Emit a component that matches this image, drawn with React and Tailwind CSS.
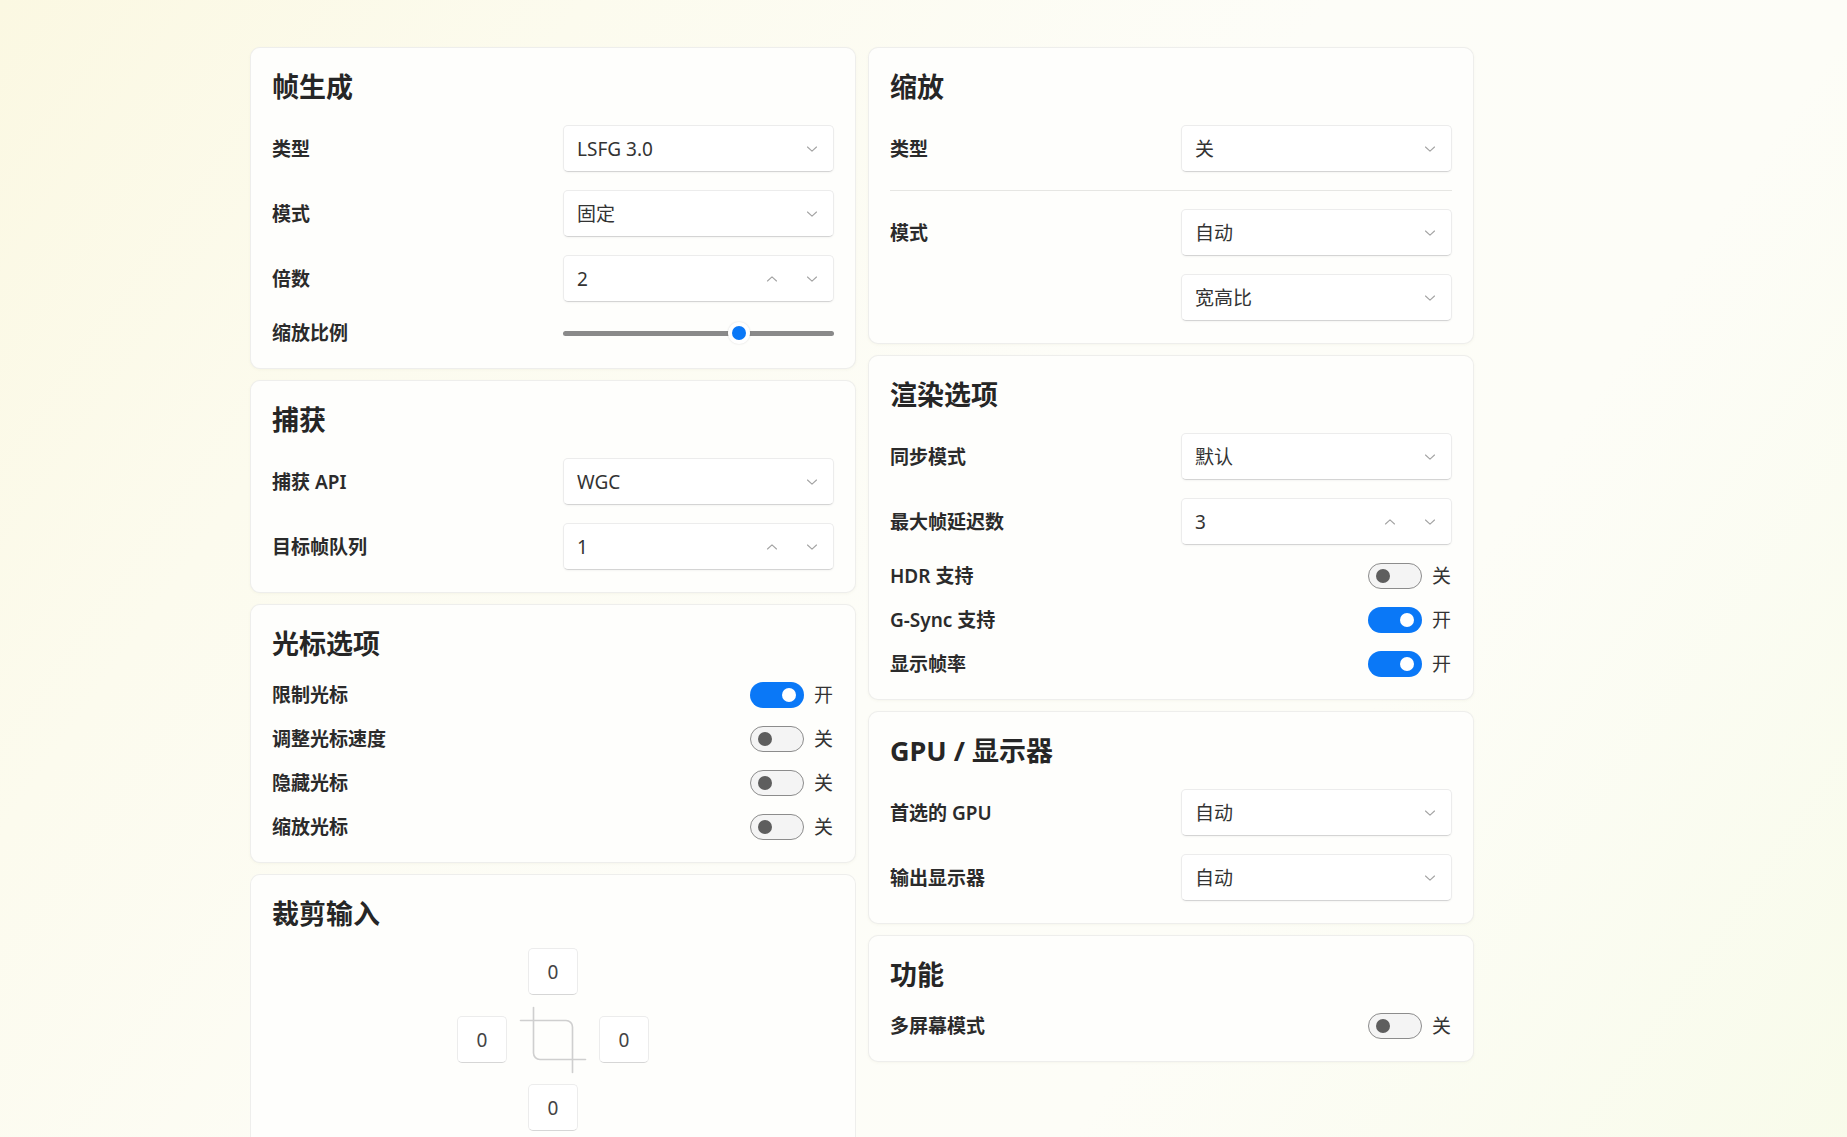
import React from "react";

function Chevron({ up }) {
  return (
    <svg width="12" height="12" viewBox="0 0 12 12" className="shrink-0">
      <path
        d={up ? "M1.5 8 L6 3.8 L10.5 8" : "M1.5 4 L6 8.2 L10.5 4"}
        stroke="#a3a3a3"
        strokeWidth="1.1"
        fill="none"
        strokeLinecap="round"
        strokeLinejoin="round"
      />
    </svg>
  );
}

function Select({ value }) {
  return (
    <div className="flex h-[47px] w-[271px] items-center justify-between rounded-[5px] border border-[#ececec] border-b-[#d4d4d4] bg-white pl-[13px] pr-[15px] shadow-[0_1px_2px_rgba(0,0,0,0.04)]">
      <span className="text-[19px] leading-[26px] text-[#333]">{value}</span>
      <Chevron />
    </div>
  );
}

function NumberBox({ value }) {
  return (
    <div className="flex h-[47px] w-[271px] items-center justify-between rounded-[5px] border border-[#ececec] border-b-[#d4d4d4] bg-white pl-[13px] pr-[15px] shadow-[0_1px_2px_rgba(0,0,0,0.04)]">
      <span className="text-[19px] leading-[26px] text-[#333]">{value}</span>
      <div className="flex items-center gap-[28px]">
        <Chevron up />
        <Chevron />
      </div>
    </div>
  );
}

function Toggle({ on }) {
  return (
    <div className="flex h-[26px] items-center gap-[10px]">
      {on ? (
        <div className="flex h-[26px] w-[54px] items-center justify-end rounded-full bg-[#0a78f7] pr-[8px]">
          <div className="h-[14px] w-[14px] rounded-full bg-white" />
        </div>
      ) : (
        <div className="flex h-[26px] w-[54px] items-center rounded-full border border-[#8c8c8c] bg-[#f4f4f4] pl-[7px]">
          <div className="h-[14px] w-[14px] rounded-full bg-[#5e5e5e]" />
        </div>
      )}
      <span className="w-[20px] text-[19px] leading-[26px] text-[#333]">{on ? "开" : "关"}</span>
    </div>
  );
}

function Card({ title, children }) {
  return (
    <div className="rounded-[10px] border border-[#00000010] bg-[#fefefc] px-[21px] pb-[22px] pt-[19px] shadow-[0_1px_3px_rgba(120,110,60,0.05)]">
      <h2 className="h-[40px] text-[27px] font-bold leading-[40px] text-[#262626]">{title}</h2>
      <div className="mt-[18px] flex flex-col gap-[18px]">{children}</div>
    </div>
  );
}

function Row({ label, children }) {
  return (
    <div className="flex h-[26px] items-center justify-between">
      <div className="text-[19px] font-semibold leading-[26px] text-[#2b2b2b]">{label}</div>
      {children}
    </div>
  );
}

function SelRow({ label, children }) {
  return (
    <div className="flex items-start justify-between">
      <div className="flex h-[47px] items-center text-[19px] font-semibold leading-[26px] text-[#2b2b2b]">{label}</div>
      <div className="flex flex-col gap-[18px]">{children}</div>
    </div>
  );
}

function Slider() {
  return (
    <div className="relative flex h-[26px] w-[271px] items-center">
      <div className="h-[5px] w-full rounded-full bg-[#8a8a8a]" />
      <div className="absolute left-[165px] top-[2px] flex h-[22px] w-[22px] items-center justify-center rounded-full bg-white shadow-[0_0_2px_rgba(0,0,0,0.15)]">
        <div className="h-[14px] w-[14px] rounded-full bg-[#0a78f7]" />
      </div>
    </div>
  );
}

function CropBox({ v }) {
  return (
    <div className="flex h-[47px] w-[50px] items-center justify-center rounded-[5px] border border-[#ececec] border-b-[#d6d6d6] bg-white text-[19px] leading-[26px] text-[#444]">
      {v}
    </div>
  );
}

function CropIcon() {
  return (
    <svg width="78" height="78" viewBox="0 0 24 24" className="-m-[14px]" fill="none" stroke="#cfcfcf" strokeWidth="0.5" strokeLinecap="round" strokeLinejoin="round">
      <path d="M6 2v14a2 2 0 0 0 2 2h14" />
      <path d="M18 22V8a2 2 0 0 0-2-2H2" />
    </svg>
  );
}

export default function App() {
  return (
    <div className="min-h-screen w-full bg-[linear-gradient(125deg,#fbf8e2_0%,#fcfbee_22%,#fdfdf8_50%,#fdfdf7_70%,#f8fbea_100%)] font-['Noto_Sans','Noto_Sans_CJK_SC',sans-serif]">
      <div className="flex gap-[12px] pl-[250px] pt-[47px]">
        {/* Left column */}
        <div className="flex w-[606px] flex-col gap-[11px]">
          <Card title="帧生成">
            <SelRow label="类型">
              <Select value="LSFG 3.0" />
            </SelRow>
            <SelRow label="模式">
              <Select value="固定" />
            </SelRow>
            <SelRow label="倍数">
              <NumberBox value="2" />
            </SelRow>
            <Row label="缩放比例">
              <Slider />
            </Row>
          </Card>

          <Card title="捕获">
            <SelRow label="捕获 API">
              <Select value="WGC" />
            </SelRow>
            <SelRow label="目标帧队列">
              <NumberBox value="1" />
            </SelRow>
          </Card>

          <Card title="光标选项">
            <Row label="限制光标">
              <Toggle on />
            </Row>
            <Row label="调整光标速度">
              <Toggle />
            </Row>
            <Row label="隐藏光标">
              <Toggle />
            </Row>
            <Row label="缩放光标">
              <Toggle />
            </Row>
          </Card>

          <div className="rounded-[10px] border border-[#00000010] bg-[#fefefc] px-[21px] pb-[40px] pt-[19px]">
            <h2 className="h-[40px] text-[27px] font-bold leading-[40px] text-[#262626]">裁剪输入</h2>
            <div className="mt-[14px] flex justify-center">
              <div className="grid grid-cols-[50px_50px_50px] grid-rows-[47px_47px_47px] gap-x-[21px] gap-y-[21px]">
                <div />
                <CropBox v="0" />
                <div />
                <CropBox v="0" />
                <div className="flex items-center justify-center">
                  <CropIcon />
                </div>
                <CropBox v="0" />
                <div />
                <CropBox v="0" />
                <div />
              </div>
            </div>
          </div>
        </div>

        {/* Right column */}
        <div className="flex w-[606px] flex-col gap-[11px]">
          <Card title="缩放">
            <SelRow label="类型">
              <Select value="关" />
            </SelRow>
            <div className="h-px w-full bg-[#e6e6e3]" />
            <SelRow label="模式">
              <Select value="自动" />
              <Select value="宽高比" />
            </SelRow>
          </Card>

          <Card title="渲染选项">
            <SelRow label="同步模式">
              <Select value="默认" />
            </SelRow>
            <SelRow label="最大帧延迟数">
              <NumberBox value="3" />
            </SelRow>
            <Row label="HDR 支持">
              <Toggle />
            </Row>
            <Row label="G-Sync 支持">
              <Toggle on />
            </Row>
            <Row label="显示帧率">
              <Toggle on />
            </Row>
          </Card>

          <Card title="GPU / 显示器">
            <SelRow label="首选的 GPU">
              <Select value="自动" />
            </SelRow>
            <SelRow label="输出显示器">
              <Select value="自动" />
            </SelRow>
          </Card>

          <Card title="功能">
            <Row label="多屏幕模式">
              <Toggle />
            </Row>
          </Card>
        </div>
      </div>
    </div>
  );
}
